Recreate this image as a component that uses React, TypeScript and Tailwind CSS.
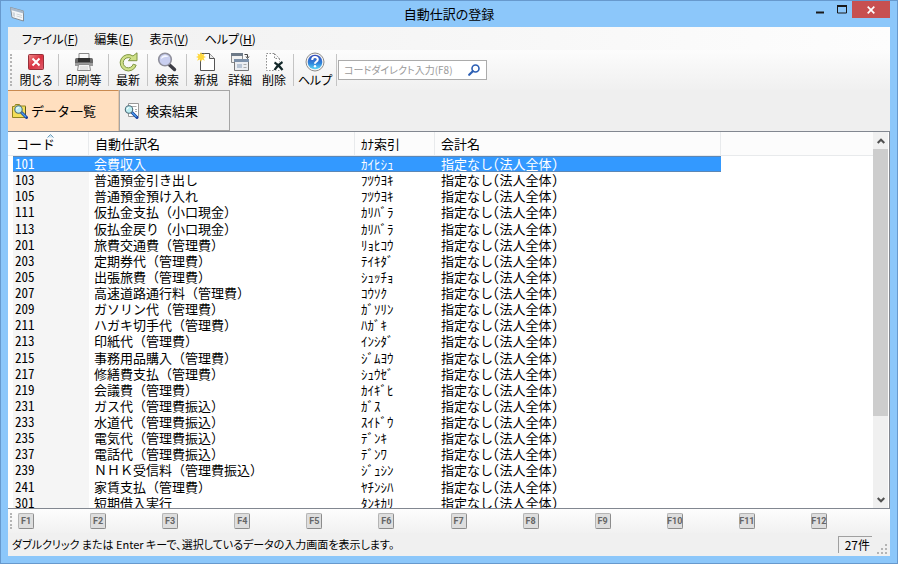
import { useState, type ReactNode } from "react";

type Entry = { code: string; name: string; kana: string };

const ACCOUNT = "指定なし(法人全体)";

const entries: Entry[] = [
  { code: "101", name: "会費収入", kana: "ｶｲﾋｼｭ" },
  { code: "103", name: "普通預金引き出し", kana: "ﾌﾂｳﾖｷ" },
  { code: "105", name: "普通預金預け入れ", kana: "ﾌﾂｳﾖｷ" },
  { code: "111", name: "仮払金支払（小口現金）", kana: "ｶﾘﾊﾞﾗ" },
  { code: "113", name: "仮払金戻り（小口現金）", kana: "ｶﾘﾊﾞﾗ" },
  { code: "201", name: "旅費交通費（管理費）", kana: "ﾘｮﾋｺｳ" },
  { code: "203", name: "定期券代（管理費）", kana: "ﾃｲｷﾀﾞ" },
  { code: "205", name: "出張旅費（管理費）", kana: "ｼｭｯﾁｮ" },
  { code: "207", name: "高速道路通行料（管理費）", kana: "ｺｳｿｸ" },
  { code: "209", name: "ガソリン代（管理費）", kana: "ｶﾞｿﾘﾝ" },
  { code: "211", name: "ハガキ切手代（管理費）", kana: "ﾊｶﾞｷ" },
  { code: "213", name: "印紙代（管理費）", kana: "ｲﾝｼﾀﾞ" },
  { code: "215", name: "事務用品購入（管理費）", kana: "ｼﾞﾑﾖｳ" },
  { code: "217", name: "修繕費支払（管理費）", kana: "ｼｭｳｾﾞ" },
  { code: "219", name: "会議費（管理費）", kana: "ｶｲｷﾞﾋ" },
  { code: "231", name: "ガス代（管理費振込）", kana: "ｶﾞｽ" },
  { code: "233", name: "水道代（管理費振込）", kana: "ｽｲﾄﾞｳ" },
  { code: "235", name: "電気代（管理費振込）", kana: "ﾃﾞﾝｷ" },
  { code: "237", name: "電話代（管理費振込）", kana: "ﾃﾞﾝﾜ" },
  { code: "239", name: "ＮＨＫ受信料（管理費振込）", kana: "ｼﾞｭｼﾝ" },
  { code: "241", name: "家賃支払（管理費）", kana: "ﾔﾁﾝｼﾊ" },
  { code: "301", name: "短期借入実行", kana: "ﾀﾝｷｶﾘ" },
];

const menus = [
  { label: "ファイル", accessKey: "F" },
  { label: "編集", accessKey: "E" },
  { label: "表示", accessKey: "V" },
  { label: "ヘルプ", accessKey: "H" },
];

const functionKeys = ["F1", "F2", "F3", "F4", "F5", "F6", "F7", "F8", "F9", "F10", "F11", "F12"];

function WindowIcon() {
  return (
    <svg width="16" height="16" viewBox="0 0 16 16" aria-hidden="true">
      <path d="M1.5 1.5 14.5 5v10L3 11.5z" fill="#f4f6f8" stroke="#838c95" />
      <path d="M1.5 1.5 14.5 5v2.4L1.8 4z" fill="#a9b9ca" />
      <path d="M3.5 6l2.5.7v4.2L3.9 10z" fill="#d0d6dc" />
      <path d="M7.5 8l5.5 1.5M7.5 10l5.5 1.5" stroke="#c3cad1" strokeWidth=".8" />
    </svg>
  );
}

function CloseIcon() {
  return (
    <svg width="20" height="20" viewBox="0 0 20 20" aria-hidden="true">
      <defs>
        <linearGradient id="close-red" x1="0" y1="0" x2="1" y2="1">
          <stop offset="0" stopColor="#ef8a8a" />
          <stop offset=".5" stopColor="#d9303f" />
          <stop offset="1" stopColor="#e06070" />
        </linearGradient>
      </defs>
      <rect x="2.5" y="2.5" width="15" height="15" rx="1" fill="url(#close-red)" stroke="#96303a" />
      <path d="M6.5 6.5l7 7M13.5 6.5l-7 7" stroke="#fff" strokeWidth="2" />
    </svg>
  );
}

function PrinterIcon() {
  return (
    <svg width="20" height="20" viewBox="0 0 20 20" aria-hidden="true">
      <path d="M5 1.5h10V8H5z" fill="#fafafa" stroke="#8a8a8a" />
      <path d="M1 7.5Q1 6 2.5 6h15Q19 6 19 7.5V14H1z" fill="#6a6a6a" />
      <path d="M4 6h12v4H4z" fill="#303030" />
      <path d="M1 11h18v3H1z" fill="#9b9b9b" />
      <path d="M4.5 12.5h11l1 6h-13z" fill="#f2f2f2" stroke="#8a8a8a" />
      <path d="M6 15h8M6 17h8" stroke="#d0d0d0" />
    </svg>
  );
}

function RefreshIcon() {
  return (
    <svg width="20" height="20" viewBox="0 0 20 20" aria-hidden="true">
      <path
        d="M15 4A8.2 8.2 0 1 0 18.2 13.2l-3-1A5.1 5.1 0 1 1 12.8 6.3L10.400 8.700H19V.8z"
        fill="#cfe088"
        stroke="#7f9643"
        strokeLinejoin="round"
      />
    </svg>
  );
}

function SearchIcon() {
  return (
    <svg width="20" height="20" viewBox="0 0 20 20" aria-hidden="true">
      <path d="M12 12.500l5.500 5" stroke="#3c3c44" strokeWidth="3.400" strokeLinecap="round" />
      <circle cx="8" cy="7.500" r="6.300" fill="#c9cff0" stroke="#8f8f9b" strokeWidth="1.600" />
      <path d="M3.800 7Q4.500 3.200 8.500 3.200q2.400 0 3 1.600Q7 4.600 3.800 7z" fill="#f6f8ff" />
    </svg>
  );
}

function NewIcon() {
  return (
    <svg width="20" height="20" viewBox="0 0 20 20" aria-hidden="true">
      <path d="M4.5 1.5h9l5 5v12h-14z" fill="#fff" stroke="#555" />
      <path d="M13.5 1.5v5h5" fill="#e8e8e8" stroke="#555" />
      <path
        d="M5 0l1.1 2.6L8.8 1.4 7.6 4.1 10 5 7.6 6l1.2 2.7-2.7-1.2L5 10 3.9 7.5 1.2 8.7 2.4 6 0 5l2.4-.9L1.2 1.4l2.7 1.2z"
        fill="#ffd83c"
      />
    </svg>
  );
}

function DetailIcon() {
  return (
    <svg width="20" height="20" viewBox="0 0 20 20" aria-hidden="true">
      <path d="M1.5 1.5h11v9h-11z" fill="#f2f2f2" stroke="#8b8b8b" />
      <path d="M1 1h12v3H1z" fill="#6e7a88" />
      <path d="M14.5 2.5h3v3M16 4.5l1.5 2L19 4.5" fill="none" stroke="#444" />
      <path d="M4.5 7.5h14v11h-14z" fill="#eceef2" stroke="#777" />
      <path d="M4 7h15v3H4z" fill="#7d91aa" />
      <path d="M7 12h5v4H7z" fill="#b8c4d4" />
      <path d="M13.5 12.5h3M13.5 15.5h3" stroke="#aaa" />
    </svg>
  );
}

function DeleteIcon() {
  return (
    <svg width="20" height="20" viewBox="0 0 20 20" aria-hidden="true">
      <path d="M2.5 1.5h8l5 5v12h-13zM10.5 1.5v5h5" fill="#fff" stroke="#8a8a8a" strokeDasharray="1.5 1.5" />
      <path d="M10 10l8 8M18.5 10L10 18" stroke="#fff" strokeWidth="4" />
      <path d="M10.5 10.5q4 2 8 7.5M18.5 10q-5 3-8 8" fill="none" stroke="#14292b" strokeWidth="2.2" />
    </svg>
  );
}

function HelpIcon() {
  return (
    <svg width="20" height="20" viewBox="0 0 20 20" aria-hidden="true">
      <defs>
        <linearGradient id="help-blue" x1="0" y1="0" x2="0" y2="1">
          <stop offset="0" stopColor="#3448b8" />
          <stop offset=".6" stopColor="#2f86dc" />
          <stop offset="1" stopColor="#5fdcf8" />
        </linearGradient>
      </defs>
      <circle cx="10" cy="10" r="9" fill="#f4f4f4" stroke="#8d8d8d" />
      <circle cx="10" cy="10" r="7.3" fill="url(#help-blue)" />
      <path d="M7.2 8Q7.2 5 10 5t2.8 2.6Q12.8 9 11 10q-1 .6-1 1.8" fill="none" stroke="#fff" strokeWidth="2" />
      <circle cx="10" cy="14.3" r="1.2" fill="#fff" />
    </svg>
  );
}

function Lens() {
  return (
    <>
      <path d="M9.5 9.5l5 5" stroke="#1c3f9c" strokeWidth="3" strokeLinecap="round" />
      <path d="M9.5 9.5l4.5 4.5" stroke="#49a3ee" strokeWidth="1.2" />
      <circle cx="6.5" cy="6.5" r="3.7" fill="#bdeef2" stroke="#4c6b78" strokeWidth="1.1" />
      <path d="M4.5 6.5q.3-2 2.2-2" fill="none" stroke="#fff" />
    </>
  );
}

function ListTabIcon() {
  return (
    <svg width="16" height="16" viewBox="0 0 16 16" aria-hidden="true">
      <path d="M.5 3.5h2l1-2h4l1 1.5h5v11.5H.5z" fill="#f3df57" stroke="#8f8320" />
      <path d="M13.5 4v10.5" stroke="#5d5720" />
      <Lens />
    </svg>
  );
}

function ResultTabIcon() {
  return (
    <svg width="16" height="16" viewBox="0 0 16 16" aria-hidden="true">
      <path d="M4.5.5h10v13h-10z" fill="#fff" stroke="#999" />
      <path d="M7 3.5h5.5M11 6.5h2M11 8.5h2" stroke="#aaa" />
      <g transform="translate(-1.5 0)">
        <Lens />
      </g>
    </svg>
  );
}

function ToolButton({ icon, label, width = "w-[34px]" }: { icon: ReactNode; label: string; width?: string }) {
  return (
    <button type="button" className={`flex flex-col items-center whitespace-nowrap text-xs leading-4 ${width}`}>
      {icon}
      {label}
    </button>
  );
}

function Separator() {
  return <div className="h-8 w-px shrink-0 bg-[#c4c4c4]" />;
}

function Grip({ className }: { className: string }) {
  return <div className={`w-0 border-l-2 border-dotted border-[#b5b5b5] ${className}`} />;
}

function TitleBar() {
  return (
    <header className="grid h-[26px] shrink-0 grid-cols-[1fr_auto_1fr] items-center">
      <div className="pl-px">
        <WindowIcon />
      </div>
      <h1 className="text-[13px] leading-5">自動仕訳の登録</h1>
      <div className="flex h-full items-start justify-end">
        <button type="button" aria-label="最小化" className="flex h-[17px] w-6 items-center justify-center">
          <svg width="10" height="10" viewBox="0 0 10 10">
            <path d="M1 7.5h8" stroke="#1a1a1a" strokeWidth="2" />
          </svg>
        </button>
        <button type="button" aria-label="最大化" className="flex h-[17px] w-5 items-center justify-center">
          <svg width="10" height="9" viewBox="0 0 10 9">
            <path d="M.5 1h9v7h-9z" fill="none" stroke="#1a1a1a" />
            <path d="M0 1h10" stroke="#1a1a1a" strokeWidth="2" />
          </svg>
        </button>
        <button type="button" aria-label="ウィンドウを閉じる" className="flex h-[17px] w-[38px] items-center justify-center bg-[#c75050]">
          <svg width="8" height="8" viewBox="0 0 8 8">
            <path d="M.7.7l6.6 6.6M7.3.7L.7 7.3" stroke="#fff" strokeWidth="1.7" />
          </svg>
        </button>
      </div>
    </header>
  );
}

function MenuBar() {
  return (
    <nav className="flex h-[23px] shrink-0 items-center gap-4 bg-linear-to-r from-[#f0f0f0] to-[#fdfdfd] pl-3.5 text-xs">
      {menus.map((m) => (
        <button key={m.label} type="button" className="whitespace-nowrap">
          {m.label}(<u>{m.accessKey}</u>)
        </button>
      ))}
    </nav>
  );
}

function ToolBar() {
  return (
    <div className="flex h-10 shrink-0 items-center bg-linear-to-b from-[#fcfcfc] to-[#f0f0f0] pl-0.5">
      <Grip className="mr-0.5 h-8" />
      <ToolButton icon={<CloseIcon />} label="閉じる" width="w-11" />
      <Separator />
      <ToolButton icon={<PrinterIcon />} label="印刷等" width="w-[49px]" />
      <Separator />
      <ToolButton icon={<RefreshIcon />} label="最新" width="w-[38px]" />
      <Separator />
      <ToolButton icon={<SearchIcon />} label="検索" width="w-[38px]" />
      <Separator />
      <div className="flex px-0.5">
        <ToolButton icon={<NewIcon />} label="新規" />
        <ToolButton icon={<DetailIcon />} label="詳細" />
        <ToolButton icon={<DeleteIcon />} label="削除" />
      </div>
      <Separator />
      <ToolButton icon={<HelpIcon />} label="ヘルプ" width="w-[42px]" />
      <Separator />
      <form
        className="ml-px flex h-5 w-[149px] items-center border border-[#ababab] bg-white"
        onSubmit={(e) => e.preventDefault()}
      >
        <input
          type="text"
          aria-label="コードダイレクト入力"
          placeholder="コードダイレクト入力(F8)"
          className="min-w-0 flex-1 pl-[5px] text-[10px] leading-4 outline-none placeholder:text-[#9a9a9a]"
        />
        <button type="submit" aria-label="コード検索" className="mr-1.5">
          <svg width="12" height="12" viewBox="0 0 12 12">
            <circle cx="7.5" cy="4.5" r="3.5" fill="none" stroke="#2c5fb4" strokeWidth="1.6" />
            <path d="M4.8 7.2L1.2 10.8" stroke="#2c5fb4" strokeWidth="2.2" strokeLinecap="round" />
          </svg>
        </button>
      </form>
    </div>
  );
}

function ViewTabs() {
  const [tab, setTab] = useState("list");
  return (
    <div role="tablist" className="flex h-[41px] shrink-0 bg-[#efefef] text-[13px] [font-feature-settings:normal]">
      <button
        type="button"
        role="tab"
        aria-selected={tab === "list"}
        onClick={() => setTab("list")}
        className={`flex w-[111px] items-center gap-[3px] border-t border-r pl-1 ${
          tab === "list" ? "border-t-[#c98a50] border-r-[#e5c5a5] bg-[#ffdfbf]" : "border-[#a5a5a5] bg-[#f0f0f0]"
        }`}
      >
        <ListTabIcon />
        データ一覧
      </button>
      <button
        type="button"
        role="tab"
        aria-selected={tab === "result"}
        onClick={() => setTab("result")}
        className={`flex w-[111px] items-center gap-1.5 border pl-1 ${
          tab === "result" ? "border-[#c98a50] bg-[#ffdfbf]" : "border-[#a5a5a5] bg-[#f0f0f0]"
        }`}
      >
        <ResultTabIcon />
        検索結果
      </button>
    </div>
  );
}

function EntryTable() {
  const [selected, setSelected] = useState("101");
  return (
    <div className="min-w-0 flex-1 overflow-hidden">
      {/* the fixed height shares the spare pixels out between the rows */}
      <table className="h-[379px] w-full table-fixed border-separate border-spacing-0 text-left text-[13px] leading-4 whitespace-nowrap [font-feature-settings:'hwid']">
        <colgroup>
          <col className="w-[5px]" />
          <col className="w-[76px]" />
          <col className="w-[266px]" />
          <col className="w-[80px]" />
          <col className="w-[286px]" />
          <col />
        </colgroup>
        <thead>
          <tr className="h-6 bg-[#fcfcfc] [&>th]:border-b [&>th]:border-[#e8eaec] [&>th]:p-0 [&>th]:font-normal">
            <th />
            <th className="relative border-r pl-[3px]!">
              <svg className="absolute top-0.5 left-[34px]" width="7" height="4" viewBox="0 0 7 4" aria-hidden="true">
                <path d="M.5 3.5L3.5.5l3 3" fill="#cfe4f2" stroke="#6d9cb8" />
              </svg>
              コード
            </th>
            <th className="border-r pl-1.5!">自動仕訳名</th>
            <th className="border-r pl-1.5!">ｶﾅ索引</th>
            <th className="border-r pl-1.5!">会計名</th>
            <th />
          </tr>
        </thead>
        <tbody>
          {entries.map((e) => {
            const on = e.code === selected;
            const cell = on ? "border-y border-[#5c87b5] bg-[#3399ff] py-0 leading-[14px] text-white" : "py-0";
            return (
              <tr key={e.code} onClick={() => setSelected(e.code)}>
                <td className="p-0" />
                <td className={`pl-0.5 ${cell} ${on ? "" : "bg-[#f5f5f5]"}`}>{e.code}</td>
                <td className={`pl-[5px] [font-feature-settings:normal] ${cell}`}>{e.name}</td>
                <td className={`pl-1.5 ${cell}`}>{e.kana}</td>
                <td className={`pl-1.5 ${cell}`}>{ACCOUNT}</td>
                <td className="p-0" />
              </tr>
            );
          })}
        </tbody>
      </table>
    </div>
  );
}

function ScrollBar() {
  return (
    <div className="mr-px flex w-[15px] shrink-0 flex-col bg-[#f0f0f0]">
      <button type="button" aria-label="上へスクロール" className="flex h-[17px] items-center justify-center">
        <svg width="8" height="6" viewBox="0 0 8 6">
          <path d="M.7 5L4 1.7 7.3 5" fill="none" stroke="#505050" strokeWidth="2" />
        </svg>
      </button>
      <div className="min-h-0 flex-1">
        <div className="h-[78%] bg-[#cdcdcd]" />
      </div>
      <button type="button" aria-label="下へスクロール" className="flex h-[17px] items-center justify-center">
        <svg width="8" height="6" viewBox="0 0 8 6">
          <path d="M.7 1L4 4.3 7.3 1" fill="none" stroke="#505050" strokeWidth="2" />
        </svg>
      </button>
    </div>
  );
}

function FunctionKeyBar() {
  return (
    <div className="flex h-6 shrink-0 items-center bg-linear-to-b from-[#fdfdfd] to-[#f1f1f1] pr-[7px] pl-0.5">
      <Grip className="h-4" />
      <div className="ml-1.5 grid flex-1 grid-cols-12">
        {functionKeys.map((k) => (
          <button
            key={k}
            type="button"
            className="flex h-4 w-4 items-center justify-center rounded-xs border border-[#8c8c8c] border-t-[#b5b5b5] border-l-[#b5b5b5] bg-[#dedede] font-['Liberation_Sans_Narrow',Roboto,sans-serif] text-[9px] leading-none font-bold text-[#666]"
          >
            {k}
          </button>
        ))}
      </div>
    </div>
  );
}

function StatusBar() {
  return (
    <footer className="flex h-[23px] shrink-0 items-center bg-[#f0f0f0] pr-0.5 pl-1 text-[11px]">
      <p className="flex-1 truncate">ダブルクリック または Enter キーで、選択しているデータの入力画面を表示します。</p>
      <p className="flex h-[17px] w-[34px] items-center justify-end border-t border-l border-[#a0a0a0] pr-0.5 text-xs">27件</p>
      <svg className="ml-1 self-end" width="12" height="14" viewBox="0 0 12 14" aria-hidden="true">
        <path d="M9 2h2v2H9zM5 6h2v2H5zM9 6h2v2H9zM1 10h2v2H1zM5 10h2v2H5zM9 10h2v2H9z" fill="#b4b4b4" />
      </svg>
    </footer>
  );
}

export default function App() {
  return (
    <div className="flex h-screen flex-col border border-[#6799cd] bg-[#8cc7fa] px-[7px] pb-[7px] font-['Noto_Sans_CJK_JP',sans-serif] text-black [font-feature-settings:'palt']">
      <TitleBar />
      <div className="flex min-h-0 flex-1 flex-col">
        <MenuBar />
        <ToolBar />
        <ViewTabs />
        <main className="flex min-h-0 flex-1 border border-l-0 border-[#828790] bg-white">
          <EntryTable />
          <ScrollBar />
        </main>
        <FunctionKeyBar />
        <StatusBar />
      </div>
    </div>
  );
}
